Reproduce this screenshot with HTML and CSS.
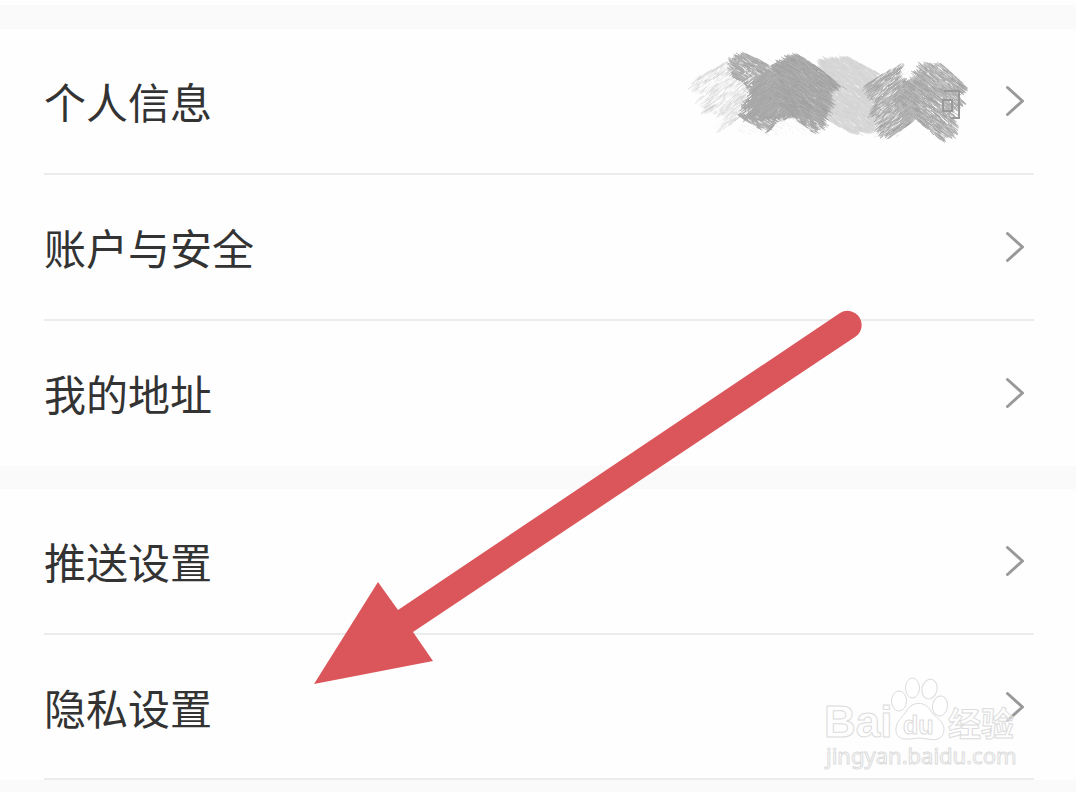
FILE: index.html
```html
<!DOCTYPE html>
<html lang="zh-CN">
<head>
<meta charset="utf-8">
<meta name="viewport" content="width=device-width, initial-scale=1">
<title>设置</title>
<link rel="stylesheet" href="styles.css">
</head>
<body>
<main class="settings">
  <nav class="group">
    <a class="row" href="#profile"><span class="label">个人信息</span><canvas class="scribble" width="310" height="100"></canvas><svg class="chevron" viewBox="0 0 20 32"><path d="M2.5 2.500 17.500 16 2.500 29.500"/></svg></a>
    <a class="row" href="#account"><span class="label">账户与安全</span><svg class="chevron" viewBox="0 0 20 32"><path d="M2.500 2.500 17.500 16 2.500 29.500"/></svg></a>
    <a class="row" href="#address"><span class="label">我的地址</span><svg class="chevron" viewBox="0 0 20 32"><path d="M2.500 2.500 17.500 16 2.500 29.500"/></svg></a>
  </nav>
  <nav class="group">
    <a class="row" href="#push"><span class="label">推送设置</span><svg class="chevron" viewBox="0 0 20 32"><path d="M2.500 2.500 17.500 16 2.500 29.500"/></svg></a>
    <a class="row ruled" href="#privacy"><span class="label">隐私设置</span><svg class="chevron" viewBox="0 0 20 32"><path d="M2.500 2.500 17.500 16 2.500 29.500"/></svg></a>
  </nav>
  <svg class="arrow" viewBox="0 0 550 376"><path d="M0 374 64 272 84 300 526 3A14 14 0 0 1 541 27L99 322 119 351Z"/></svg>
  <svg class="watermark" viewBox="0 0 200 100">
    <g class="mark">
      <text class="brand" x="0" y="58">Bai</text>
      <ellipse cx="75" cy="22" rx="7.500" ry="10"/>
      <ellipse cx="88.500" cy="9" rx="7" ry="10"/>
      <ellipse cx="105.500" cy="10" rx="7.500" ry="10" transform="rotate(12 105 10)"/>
      <ellipse cx="116" cy="27" rx="7.500" ry="10" transform="rotate(8 116 27)"/>
      <path d="M83 31C89 22 101 22 107 32C110 38 120 42 120 50C120 60 112 62 104 60Q95 58 86 60C77 61 71 58 72 49C73 41 80 37 83 31Z"/>
      <text class="du" x="79" y="55">du</text>
      <text class="han" x="124" y="57">经验</text>
      <text class="url" x="2" y="85">jingyan.baidu.com</text>
    </g>
  </svg>
</main>
<script src="scribble.js"></script>
</body>
</html>
```
FILE: styles.css
```css
body {
  margin: 0;
  background: #fafafa;
  color: #333;
  font-family: "Noto Sans CJK SC", sans-serif;
}

.settings {
  position: relative;
  border-top: 5px solid #fefefe;
  padding: 24px 0 13px;
  display: flex;
  flex-direction: column;
  gap: 23px;
}

.group {
  background: #fefefe;
  padding: 0 42px 0 44px;
}

.row {
  display: flex;
  align-items: center;
  gap: 32px;
  box-sizing: border-box;
  min-height: 146px;
  padding-right: 9px;
  border-bottom: 2px solid #ececec;
  color: inherit;
  text-decoration: none;
}

.row:last-child {
  min-height: 145px;
}

.row:last-child:not(.ruled) {
  border-bottom-color: transparent;
}

.label {
  flex: 1;
  font-size: 42px;
  line-height: 60px;
}

.scribble {
  width: 310px;
  height: 100px;
  margin-top: -8px;
}

.chevron {
  width: 20px;
  height: 32px;
  fill: none;
  stroke: #999;
  stroke-width: 3;
  stroke-linecap: round;
  stroke-linejoin: round;
}

.arrow {
  position: absolute;
  left: 314px;
  top: 305px;
  width: 550px;
  height: 376px;
  fill: #db565b;
  pointer-events: none;
}

.watermark {
  position: absolute;
  right: 52px;
  bottom: 14px;
  width: 200px;
  height: 100px;
  overflow: visible;
  pointer-events: none;
}

.mark {
  fill: rgba(255, 255, 255, 0.5);
  stroke: #dcdcdc;
  stroke-width: 1;
}

.brand {
  font: bold 44px "Liberation Sans", sans-serif;
}

.du {
  font: bold 25px "Liberation Sans", sans-serif;
}

.han {
  font: bold 33px "Noto Sans CJK SC", sans-serif;
}

.url {
  font: 22px "Noto Sans", sans-serif;
}
```
FILE: scribble.js
```js
// Brush scribble that hides the account name.
const canvas = document.querySelector(".scribble");
const ctx = canvas.getContext("2d");
let seed = 7;
const rand = () => (seed = (seed * 16807) % 2147483647) / 2147483647;

function hatch(points, angle, count, length, low, high, alpha) {
  const path = new Path2D("M" + points.map(p => p.join(" ")).join("L") + "Z");
  const xs = points.map(p => p[0]);
  const ys = points.map(p => p[1]);
  const x0 = Math.min(...xs), y0 = Math.min(...ys);
  const w = Math.max(...xs) - x0, h = Math.max(...ys) - y0;
  for (let i = 0; i < count; i++) {
    const x = x0 + rand() * w, y = y0 + rand() * h;
    if (!ctx.isPointInPath(path, x, y)) continue;
    const a = (angle + rand() * 8 - 4) * Math.PI / 180;
    const l = length * (0.2 + rand() * rand() * 0.9) / 2;
    const c = Math.round(low + rand() * (high - low));
    ctx.strokeStyle = `rgba(${c},${c},${c},${alpha})`;
    ctx.beginPath();
    ctx.moveTo(x - Math.cos(a) * l, y - Math.sin(a) * l);
    ctx.lineTo(x + Math.cos(a) * l, y + Math.sin(a) * l);
    ctx.stroke();
  }
}

ctx.translate(-1, -1);
ctx.lineWidth = 1;
hatch([[30,36],[66,16],[90,35],[92,65],[58,87],[62,72],[44,66]], -38, 1200, 15, 205, 240, 0.7);
hatch([[158,16],[187,12],[217,28],[223,75],[214,86],[190,88],[158,70]], 35, 4200, 14, 208, 220, 0.8);
hatch([[69,16],[84,8],[108,20],[100,60],[112,81],[98,84],[78,71],[91,53],[84,38],[72,32]], 30, 3200, 14, 160, 190, 0.9);
hatch([[97,33],[110,20],[132,13],[138,70],[118,76],[106,88],[110,74],[94,76],[80,68]], -38, 4200, 16, 160, 178, 0.8);
hatch([[118,18],[137,9],[155,21],[180,41],[168,46],[170,60],[165,68],[163,78],[152,88],[136,75],[116,55]], 33, 4200, 16, 155, 180, 0.8);
hatch([[204,40],[241,18],[236,36],[258,34],[256,74],[230,92],[216,86],[220,74],[210,70],[216,56],[208,50]], -38, 2500, 16, 155, 195, 0.9);
hatch([[255,28],[258,18],[282,20],[308,44],[298,50],[304,60],[292,64],[295,88],[280,96],[252,72],[238,54]], 36, 3200, 14, 155, 195, 0.9);

// Gaps left by the dry brush.
hatch([[60,14],[110,14],[112,28],[80,32]], 32, 45, 9, 230, 254, 0.7);
hatch([[76,70],[112,72],[160,76],[160,90],[78,90]], 32, 120, 9, 235, 254, 0.8);
hatch([[206,40],[240,18],[252,34],[222,66]], -38, 130, 12, 225, 254, 0.7);
hatch([[212,60],[235,60],[240,92],[212,92]], -38, 60, 9, 215, 254, 0.7);
hatch([[256,16],[285,18],[312,44],[298,60],[292,94],[270,86],[285,50]], 36, 170, 9, 220, 254, 0.6);
hatch([[30,35],[90,20],[92,65],[55,88]], -38, 240, 10, 248, 254, 0.9);

ctx.strokeStyle = "#999";
ctx.lineWidth = 2;
ctx.stroke(new Path2D("M282 45H297V72H289M281 54H290V65H281Z"));
```
